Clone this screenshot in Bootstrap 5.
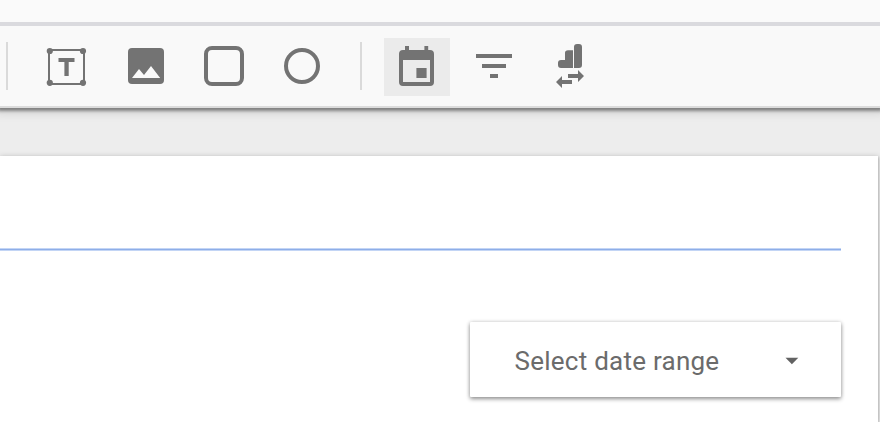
<!DOCTYPE html>
<html lang="en">
<head>
<meta charset="utf-8">
<meta name="viewport" content="width=device-width, initial-scale=1">
<title>Report editor</title>
<link href="https://cdn.jsdelivr.net/npm/bootstrap@5.3.0/dist/css/bootstrap.min.css" rel="stylesheet">
<style>
body{font-family:Roboto,"Liberation Sans",sans-serif;background:#ededed;height:422px}
.menu-strip{height:26px;background:#fafafa;border-bottom:4px solid #dadade;z-index:2}
.toolbar{height:82px;background:#f9f9f9;border-bottom:2px solid #dcdcdc;padding-left:6px;box-shadow:0 1px 3px 2px rgba(0,0,0,.42),0 3px 8px 4px rgba(0,0,0,.08);z-index:1}
.divider{width:2px;height:48px;background:#dadada}
.tool{width:66px;height:58px;margin-top:2px;border:0;border-radius:0;color:#737373;--bs-btn-color:#737373}
.tool.on{background:#ebebeb}
.tool svg{display:block}
.gap-25{margin-left:25px}.gap-14{margin-left:14px}.gap-12{margin-left:12px}.gap-22{margin-left:22px}.gap-11{margin-left:11px}.gap-10{margin-left:10px}
.sheet{margin:48px 2px 0 0;padding-right:37px;box-shadow:0 0 5px rgba(0,0,0,.16),1px 1px 2px rgba(0,0,0,.16)}
.rule{height:3px;margin-top:92px;background:linear-gradient(#c3d5f5 1px,#8eaee8 1px 2px,#c3d5f5 2px)}
.range{width:371px;height:75px;margin-top:71px;padding:2px 42px 0 44.5px;border:0;border-radius:1px;background:#fff;color:#6b6b6b;font-size:26px;letter-spacing:.25px;box-shadow:0 2px 4px rgba(0,0,0,.4),0 0 4px rgba(0,0,0,.14)}
.range span{padding-top:2px}
</style>
<script src="https://cdn.jsdelivr.net/npm/bootstrap@5.3.0/dist/js/bootstrap.bundle.min.js"></script>
</head>
<body class="d-flex flex-column overflow-hidden">
<div class="menu-strip flex-shrink-0 position-relative"></div>
<div class="toolbar d-flex align-items-center flex-shrink-0 position-relative" role="toolbar" aria-label="Insert">
  <div class="divider"></div>
  <button class="btn tool p-0 gap-25" aria-label="Text"><svg width="66" height="58" viewBox="33 38 66 58" fill="currentColor"><path d="M49 50H84V84H49Z" fill="none" stroke="currentColor" stroke-width="2"/><circle cx="49.8" cy="51" r="3.1"/><circle cx="83" cy="51" r="3.1"/><circle cx="49.8" cy="82.8" r="3.1"/><circle cx="83" cy="82.8" r="3.1"/><path d="M58.5 58H74.5V62H68.7V76H64.4V62H58.5Z"/></svg></button>
  <button class="btn tool p-0 gap-14" aria-label="Image"><svg width="66" height="58" viewBox="113 38 66 58" fill="currentColor"><rect x="128" y="48" width="36" height="36" rx="4"/><path d="M132 78L139 69L144 75L151 66L160.2 78Z" fill="#f9f9f9"/></svg></button>
  <button class="btn tool p-0 gap-12" aria-label="Rectangle"><svg width="66" height="58" viewBox="191 38 66 58" fill="none" stroke="currentColor" stroke-width="4"><rect x="206" y="48" width="36" height="36" rx="6"/></svg></button>
  <button class="btn tool p-0 gap-12" aria-label="Circle"><svg width="66" height="58" viewBox="269 38 66 58" fill="none" stroke="currentColor" stroke-width="4"><circle cx="302" cy="66" r="16"/></svg></button>
  <div class="divider gap-25"></div>
  <button class="btn tool on p-0 gap-22" aria-label="Date range"><svg width="66" height="58" viewBox="384 38 66 58" fill="currentColor"><path d="M405 46H409V51H405ZM424.4 46H428.2V51H424.4Z"/><path fill-rule="evenodd" d="M403 50H430Q434 50 434 54V82Q434 86 430 86H403Q399 86 399 82V54Q399 50 403 50ZM403 60V82H430V60Z"/><path d="M416.4 68H426.6V78H416.4Z"/></svg></button>
  <button class="btn tool p-0 gap-11" aria-label="Filter"><svg width="66" height="58" viewBox="461 38 66 58" fill="currentColor"><path d="M476 54H512V58H476ZM482 64H506V68H482ZM490 74H498V78H490Z"/></svg></button>
  <button class="btn tool p-0 gap-10" aria-label="Data control"><svg width="66" height="58" viewBox="537 38 66 58" fill="currentColor"><path d="M574 68V47Q574 44 577 44H579Q582 44 582 47V65Q582 68 579 68ZM561 68Q558 68 558 65V63Q558 60 561 60H565V53Q565 50.3 568 50.3H573V68ZM568 74H578V70L584 76L578 82V78H568ZM572 80H562V76L556 82L562 88V84H572Z"/></svg></button>
</div>
<main class="sheet bg-white flex-grow-1 d-flex flex-column">
  <div class="rule flex-shrink-0"></div>
  <button class="btn range d-flex align-items-center justify-content-between align-self-end flex-shrink-0"><span>Select date range</span><svg width="14" height="8" viewBox="0 0 14 8" fill="#626262"><path d="M.5 .8H13.3L6.9 7.2Z"/></svg></button>
</main>
</body>
</html>
